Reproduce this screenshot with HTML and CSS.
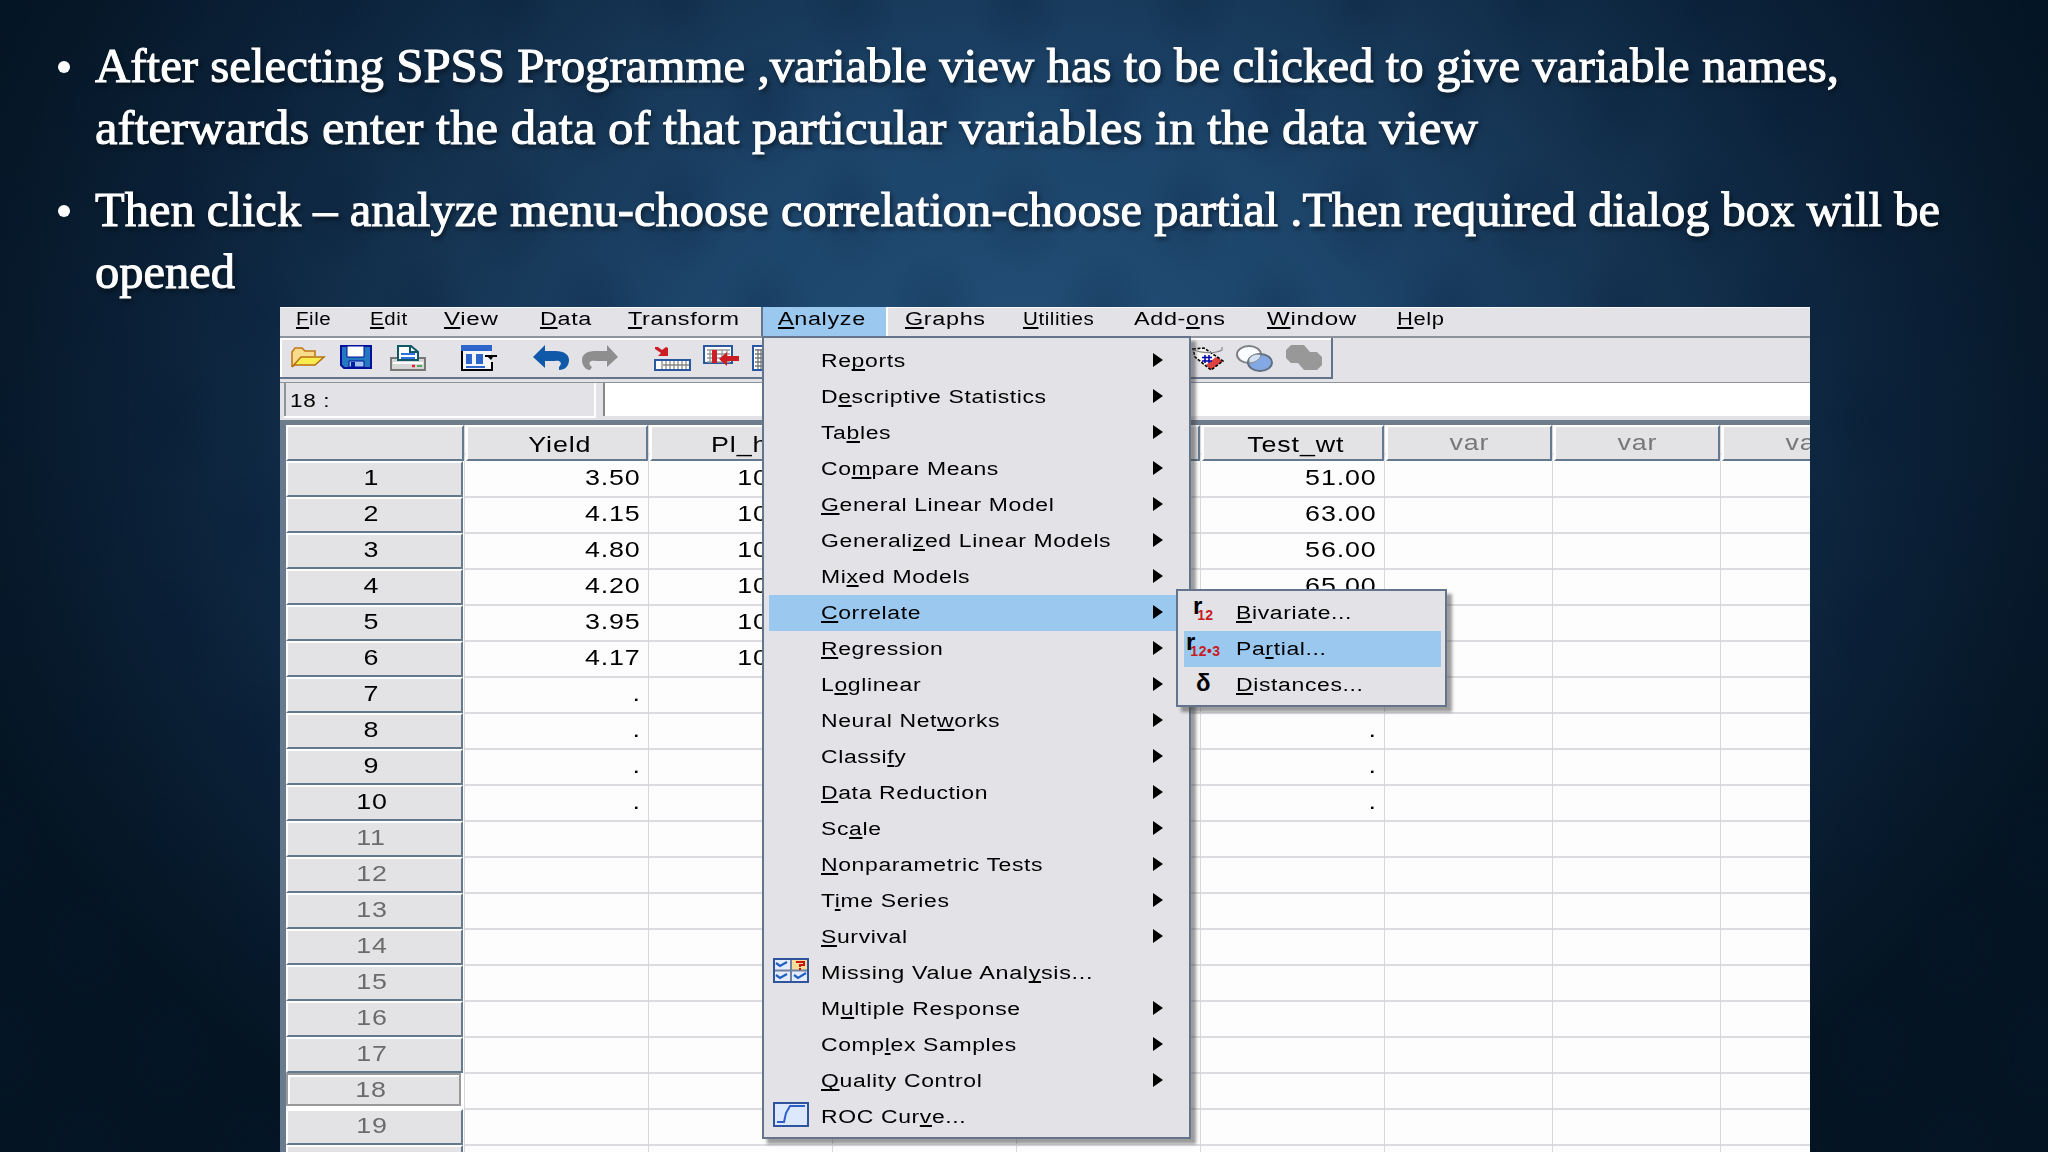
FILE: index.html
```html
<!DOCTYPE html>
<html lang="en">
<head>
<meta charset="utf-8">
<title>Partial correlation in SPSS</title>
<link rel="stylesheet" href="styles.css">
</head>
<body>
<main class="slide">
  <ul class="bullets">
    <li>
      <svg class="lines" width="1900" height="124" viewBox="0 0 1900 124">
        <text x="0" y="46" textLength="1744" lengthAdjust="spacingAndGlyphs">After selecting SPSS Programme ,variable view has to be clicked to give variable names,</text>
        <text x="0" y="107.500" textLength="1383" lengthAdjust="spacingAndGlyphs">afterwards enter the data of that particular variables in the data view</text>
      </svg>
    </li>
    <li>
      <svg class="lines" width="1900" height="124" viewBox="0 0 1900 124">
        <text x="0" y="46" textLength="1845" lengthAdjust="spacingAndGlyphs">Then click – analyze menu-choose correlation-choose partial .Then required dialog box will be</text>
        <text x="0" y="107.500" textLength="140" lengthAdjust="spacingAndGlyphs">opened</text>
      </svg>
    </li>
  </ul>

  <section class="app">
    <nav class="menubar">
      <span class="narrow"><b><u>F</u>ile</b></span><span class="narrow"><b><u>E</u>dit</b></span><span class="broad"><b><u>V</u>iew</b></span><span><b><u>D</u>ata</b></span><span><b><u>T</u>ransform</b></span><span class="open"><b><u>A</u>nalyze</b></span><span><b><u>G</u>raphs</b></span><span class="narrow"><b><u>U</u>tilities</b></span><span><b>Add-<u>o</u>ns</b></span><span class="broad"><b><u>W</u>indow</b></span><span class="snug"><b><u>H</u>elp</b></span>
    </nav>

    <div class="toolrow">
      <div class="toolbar">
        <svg class="i-open" width="36" height="26" viewBox="0 0 36 26"><path d="M2 20V5L5 1H12L15 4H25V9" fill="#f8dc8c" stroke="#c07818" stroke-width="1.6"/><path d="M2 20L11 10H34L25 18H5Z" fill="#f8ec50" stroke="#b87010" stroke-width="1.5"/></svg>
        <svg class="i-save" width="32" height="24" viewBox="0 0 32 24"><path d="M1 1H31V23H4L1 20Z" fill="#2478c0" stroke="#00109c" stroke-width="2"/><path d="M7 1H24V12H7Z" fill="#fff" stroke="#00109c"/><path d="M9 16H24V22H9Z" fill="#9cc0f0" stroke="#00109c"/><path d="M11 17H15V22H11Z" fill="#0020a0"/></svg>
        <svg class="i-print" width="36" height="26" viewBox="0 0 36 26"><path d="M1 13H35V25H1Z" fill="#d6d6d6" stroke="#777" stroke-width="2"/><path d="M3 18H33" stroke="#fff" stroke-width="2"/><path d="M8 15V1H21L28 7V15Z" fill="#fff" stroke="#105868" stroke-width="2"/><path d="M20 1V7H28" fill="none" stroke="#105868" stroke-width="2"/><path d="M11 9H25M11 13H25" stroke="#3070e0" stroke-width="2"/><path d="M22 21H25" stroke="#e02030" stroke-width="2.5"/><path d="M27 21H32" stroke="#50a860" stroke-width="2"/></svg>
        <svg class="i-dialog" width="37" height="26" viewBox="0 0 37 26"><path d="M1 6V25H31V17" fill="none" stroke="#000" stroke-width="2"/><path d="M2 6H30V24H2Z" fill="#f4f6fc"/><path d="M0 0H31V6H0Z" fill="#2f66cc"/><path d="M5 9H11V19H5ZM15 9H22V19H15ZM5 21H24V23H5Z" fill="#2f66cc"/><path d="M24 10H36V12H32L30 15L27 12H24Z" fill="#000"/></svg>
        <svg class="i-undo" width="37" height="25" viewBox="0 0 37 25"><path d="M0 12L12 0V6H22C32 6 36 10 36 15C36 21 32 25 26 25V22C30 18 27 15 22 16H12V23Z" fill="#1058a8"/></svg>
        <svg class="i-redo" width="37" height="25" viewBox="0 0 37 25"><path d="M36 12L25 0V6H13C4 6 0 10 0 15C0 21 4 25 8 25L10 22C5 18 8 15 14 16H25V22Z" fill="#8e8e8e"/></svg>
        <svg class="i-goto" width="37" height="26" viewBox="0 0 37 26"><path d="M1 15H36V25H1Z" fill="#fff" stroke="#2858a0" stroke-width="2"/><path d="M8 16V24M12 16V24M16 16V24M20 16V24M24 16V24M28 16V24M32 16V24M9 20H35" stroke="#888" stroke-width="1.3"/><path d="M1 2H4L8 5L12 2L14 3V11H4L7 8L1 4Z" fill="#cc1c24"/></svg>
        <svg class="i-insert" width="37" height="24" viewBox="0 0 37 24"><path d="M1 1H29V18H1Z" fill="#fff" stroke="#2858a0" stroke-width="2"/><path d="M4 5H27M4 9H27M4 13H27M4 17H27M7 5V17M13 5V17M19 5V17M24 5V17" stroke="#999" stroke-width="1.3"/><path d="M9 5H14V18H9Z" fill="#cc2028"/><path d="M16 14L24 7V11H36V16H24V21Z" fill="#cc1c24"/></svg>
        <svg class="i-column" width="37" height="26" viewBox="0 0 37 26"><path d="M1 1H29V25H1Z" fill="#fff" stroke="#2858a0" stroke-width="2"/><path d="M3 5H27M3 9H27M3 13H27M3 17H27M3 21H27M6 4V24M9 4V24" stroke="#777" stroke-width="1.3"/></svg>
        <svg class="i-label" width="35" height="26" viewBox="0 0 35 26"><path d="M4 4L15 3L34 16L22 25L6 12Z" fill="#f8f8f8"/><path d="M27 12L34 16L22 25L17 20Z" fill="#dc4040"/><path d="M4 4L15 3L34 16L22 25L6 12Z" fill="none" stroke="#000" stroke-width="1.6" stroke-dasharray="3 1.5"/><path d="M5 5C12 8 26 9 33 5V2" fill="none" stroke="#888" stroke-width="1.2"/><path d="M16 10V18M20 10V18M13 12.500H23M13 16H23" stroke="#0000a8" stroke-width="1.5"/></svg>
        <svg class="i-sets" width="37" height="27" viewBox="0 0 37 27"><ellipse cx="13" cy="9.500" rx="12" ry="8.500" fill="#fafcff" stroke="#808080" stroke-width="2"/><ellipse cx="24" cy="17.500" rx="12" ry="8.500" fill="#84a8e4" stroke="#607080" stroke-width="2"/><path d="M13 14C15 10 21 8 25 10C24 15 18 18 13 18Z" fill="#d4e0f4" stroke="#888"/></svg>
        <svg class="i-allsets" width="37" height="26" viewBox="0 0 37 26"><path d="M5 0H18L24 7H31L36 12V20L31 25H18L12 18H5L0 13V5Z" fill="#989898"/></svg>
      </div>
    </div>

    <div class="editrow">
      <div class="cellname"><b>18 :</b></div>
      <div class="cellvalue"></div>
    </div>

    <div class="sheet">
      <div class="col rowheads">
        <div class="head"></div>
        <div class="rh"><b>1</b></div><div class="rh"><b>2</b></div><div class="rh"><b>3</b></div><div class="rh"><b>4</b></div><div class="rh"><b>5</b></div><div class="rh"><b>6</b></div><div class="rh"><b>7</b></div><div class="rh"><b>8</b></div><div class="rh"><b>9</b></div><div class="rh"><b>10</b></div>
        <div class="rh idle"><b>11</b></div><div class="rh idle"><b>12</b></div><div class="rh idle"><b>13</b></div><div class="rh idle"><b>14</b></div><div class="rh idle"><b>15</b></div><div class="rh idle"><b>16</b></div><div class="rh idle"><b>17</b></div><div class="rh idle current"><b>18</b></div><div class="rh idle"><b>19</b></div><div class="rh idle"></div>
      </div>
      <div class="col">
        <div class="head"><b>Yield</b></div>
        <div class="cell"><b>3.50</b></div><div class="cell"><b>4.15</b></div><div class="cell"><b>4.80</b></div><div class="cell"><b>4.20</b></div><div class="cell"><b>3.95</b></div><div class="cell"><b>4.17</b></div><div class="cell"><b>.</b></div><div class="cell"><b>.</b></div><div class="cell"><b>.</b></div><div class="cell"><b>.</b></div>
      </div>
      <div class="col height">
        <div class="head"><b>Pl_ht</b></div>
        <div class="cell"><b>10</b></div><div class="cell"><b>10</b></div><div class="cell"><b>10</b></div><div class="cell"><b>10</b></div><div class="cell"><b>10</b></div><div class="cell"><b>10</b></div>
      </div>
      <div class="col"><div class="head"></div></div>
      <div class="col"><div class="head"></div></div>
      <div class="col">
        <div class="head"><b>Test_wt</b></div>
        <div class="cell"><b>51.00</b></div><div class="cell"><b>63.00</b></div><div class="cell"><b>56.00</b></div><div class="cell"><b>65.00</b></div><div class="cell"></div><div class="cell"></div><div class="cell"></div><div class="cell"><b>.</b></div><div class="cell"><b>.</b></div><div class="cell"><b>.</b></div>
      </div>
      <div class="col unused"><div class="head"><b>var</b></div></div>
      <div class="col unused"><div class="head"><b>var</b></div></div>
      <div class="col unused"><div class="head"><b>var</b></div></div>
    </div>

    <div class="menu analyze">
      <div class="item more"><b>Re<u>p</u>orts</b></div>
      <div class="item more"><b>D<u>e</u>scriptive Statistics</b></div>
      <div class="item more"><b>Ta<u>b</u>les</b></div>
      <div class="item more"><b>Co<u>m</u>pare Means</b></div>
      <div class="item more"><b><u>G</u>eneral Linear Model</b></div>
      <div class="item more"><b>Generali<u>z</u>ed Linear Models</b></div>
      <div class="item more"><b>Mi<u>x</u>ed Models</b></div>
      <div class="item more on"><b><u>C</u>orrelate</b></div>
      <div class="item more"><b><u>R</u>egression</b></div>
      <div class="item more"><b>L<u>o</u>glinear</b></div>
      <div class="item more"><b>Neural Net<u>w</u>orks</b></div>
      <div class="item more"><b>Classi<u>f</u>y</b></div>
      <div class="item more"><b><u>D</u>ata Reduction</b></div>
      <div class="item more"><b>Sc<u>a</u>le</b></div>
      <div class="item more"><b><u>N</u>onparametric Tests</b></div>
      <div class="item more"><b>T<u>i</u>me Series</b></div>
      <div class="item more"><b><u>S</u>urvival</b></div>
      <div class="item full"><svg width="36" height="26" viewBox="0 0 36 26"><path d="M1 1H35V24H1Z" fill="#e4ecfc"/><path d="M19 2H34V12H19Z" fill="#f8dc98"/><path d="M1 12.500H35M18 1V24" stroke="#7080a0" stroke-width="2"/><path d="M1 1H35V24H1Z" fill="none" stroke="#30549c" stroke-width="2"/><path d="M3 5L7 8L14 4M3 17L7 20L14 16M21 17L25 20L33 15" fill="none" stroke="#2060c0" stroke-width="2.200"/><path d="M23 4H31V7H27V9M27 10V12" fill="none" stroke="#c41818" stroke-width="2"/></svg><b>Missing Value Anal<u>y</u>sis...</b></div>
      <div class="item more"><b>M<u>u</u>ltiple Response</b></div>
      <div class="item more"><b>Comp<u>l</u>ex Samples</b></div>
      <div class="item more"><b><u>Q</u>uality Control</b></div>
      <div class="item"><svg width="36" height="26" viewBox="0 0 36 26"><path d="M1 1H35V24H1Z" fill="#dce8fc" stroke="#30549c" stroke-width="2"/><path d="M4 20H11L13 11L17 4H32" fill="none" stroke="#2c60c8" stroke-width="2"/></svg><b>ROC Cur<u>v</u>e...</b></div>
    </div>

    <div class="menu correlate">
      <div class="item"><span class="stat"><i>r</i><em>12</em></span><b><u>B</u>ivariate...</b></div>
      <div class="item on"><span class="stat wide"><i>r</i><em>12•3</em></span><b>Pa<u>r</u>tial...</b></div>
      <div class="item"><span class="stat delta"><i>δ</i></span><b><u>D</u>istances...</b></div>
    </div>
  </section>
</main>
</body>
</html>
```
FILE: styles.css
```css
* { box-sizing: border-box; }

body {
  margin: 0;
  width: 2048px;
  height: 1152px;
  overflow: hidden;
}

.slide {
  width: 2048px;
  height: 1152px;
  overflow: hidden;
  padding-top: 36px;
  background:
    radial-gradient(ellipse 50px 64px at 50% 50%, rgba(4, 24, 52, .2), rgba(4, 24, 52, 0)) 0 0 / 170px 210px,
    radial-gradient(ellipse 50px 64px at 50% 50%, rgba(4, 24, 52, .2), rgba(4, 24, 52, 0)) 85px 105px / 170px 210px,
    radial-gradient(ellipse 1120px 900px at 1024px 400px, #244f78 0%, #1d456b 30%, #163655 52%, #0c233b 75%, #041422 100%);
}

/* Slide text */
.bullets {
  list-style: none;
  margin: 0;
  padding: 0 0 0 58px;
  height: 271px;
  display: flex;
  flex-direction: column;
  gap: 20px;
}
.bullets li { display: flex; gap: 25px; }
.bullets li::before {
  content: "";
  flex: none;
  width: 12px;
  height: 12px;
  margin-top: 25px;
  border-radius: 50%;
  background: #fff;
}
.lines { overflow: visible; display: block; }
.lines text {
  font: 47.5px "Liberation Serif", serif;
  fill: #fff;
  stroke: #fff;
  stroke-width: 1px;
  filter: drop-shadow(2px 3px 2px rgba(0, 0, 0, .45));
}

/* Application window */
.app {
  position: relative;
  width: 1530px;
  height: 845px;
  margin-left: 280px;
  overflow: hidden;
  background: #e3e2e7;
  font: 18px "Liberation Sans", Arial, sans-serif;
  color: #000;
}
.app b {
  display: inline-block;
  font-weight: normal;
  white-space: nowrap;
  letter-spacing: .5px;
  transform: scaleX(1.275);
  transform-origin: left center;
}
.app u {
  text-decoration-thickness: 2px;
  text-underline-offset: 2px;
  text-decoration-skip-ink: none;
}
.app .full b { transform: scaleX(1.3); }

.menubar {
  display: grid;
  grid-template-columns: 73.5px 74px 96px 88px 150.5px 127px 118px 111px 133px 130px auto;
  height: 31px;
  padding-left: 16px;
  border-top: 1px solid #f6f8fb;
  border-bottom: 2px solid #8e939c;
  line-height: 23px;
}
.menubar b { transform: scaleX(1.3); }
.menubar .narrow b { transform: scaleX(1.14); }
.menubar .snug b { transform: scaleX(1.22); }
.menubar .broad b { transform: scaleX(1.34); }
.menubar .open {
  margin: -1px 19px 0 -15px;
  padding: 1px 0 0 15px;
  background: #9bc8ee;
  box-shadow: -2px 0 #64748c, 2px 0 #fff;
}

.toolrow { height: 45px; border-bottom: 1px solid #8e939c; }
.toolbar {
  display: flex;
  align-items: flex-start;
  width: 1053px;
  height: 41px;
  padding: 7px 0 0 10px;
  border: 2px solid #64748c;
  border-width: 0 2px 2px 0;
  box-shadow: inset 2px 2px #fff;
}
.toolbar svg { flex: none; display: block; }
.i-open { margin-top: 2px; }
.i-save { margin-left: 14px; }
.i-print { margin-left: 18px; }
.i-dialog { margin-left: 35px; }
.i-undo { margin-left: 35px; }
.i-redo { margin-left: 12px; }
.i-goto { margin-left: 35px; }
.i-insert { margin-left: 12px; }
.i-column { margin-left: 12px; }
.i-label { margin-left: 400px; }
.i-sets { margin-left: 12px; }
.i-allsets { margin-left: 13px; }

.editrow {
  display: flex;
  gap: 7px;
  height: 37px;
  padding: 0 0 4px 4px;
}
.cellname {
  width: 312px;
  padding: 8px 0 0 4px;
  border-left: 2px solid #8e939c;
  border-right: 2px solid #fff;
  box-shadow: 0 2px #fff;
}
.cellname b { transform: scaleX(1.25); }
.cellvalue { flex: 1; background: #fff; border-left: 2px solid #888; }

/* Data grid */
.sheet {
  display: flex;
  height: 732px;
  padding-left: 6px;
  border-top: 5px solid #6f7c8c;
  background: linear-gradient(90deg, #6b7b8f 6px, #fff 6px);
  font-size: 22px;
}
.sheet b { letter-spacing: .7px; transform: scaleX(1.22); }
.col {
  flex: none;
  width: 184px;
  border-right: 1px solid #d9d7dd;
  background: repeating-linear-gradient(#fdfdfd 0 34px, #dddbe0 34px 36px) 0 37px;
}
.col.unused { width: 168px; }
.head {
  height: 36px;
  margin-left: 1px;
  border: 2px solid #fff;
  border-right-color: #64788e;
  border-bottom-color: #64788e;
  background: #e3e3e5;
  line-height: 35px;
  text-align: center;
}
.head b { transform-origin: center; }
.col:not(.unused) .head { padding-left: 6px; }
.unused .head { color: #777; line-height: 32px; }
.cell {
  height: 36px;
  padding-right: 7px;
  line-height: 33px;
  text-align: right;
}
.cell b { transform-origin: right center; }
.col.height .cell { padding-right: 63px; }

.rowheads.col { width: 179px; background: #fff; }
.rowheads .head { margin-left: 0; }
.rh {
  width: 177px;
  height: 36px;
  padding-right: 6px;
  border: 2px solid #fff;
  border-right-color: #64788e;
  border-bottom-color: #64788e;
  background: #e3e3e5;
  line-height: 30px;
  text-align: center;
}
.rh b { transform-origin: center; }
.rh.idle { color: #6c6c6c; }
.rh.current {
  width: 175px;
  height: 33px;
  margin-bottom: 3px;
  border-color: #999;
  box-shadow: inset 2px 2px #fff;
  line-height: 30px;
}

/* Drop-down menus */
.menu {
  position: absolute;
  border: 2px solid #64748c;
  background: #e3e2e7;
  box-shadow: 5px 5px 3px rgba(60, 60, 60, .5);
}
.analyze {
  left: 482px;
  top: 29px;
  width: 429px;
  height: 803px;
  padding: 5px 3px 0;
}
.item {
  position: relative;
  height: 36.03px;
  padding-left: 54px;
  line-height: 36px;
}
.item.on { background: linear-gradient(#9bc8ee, #9bc8ee) 2px 0 no-repeat; }
.item.more::after {
  content: "";
  position: absolute;
  right: 23px;
  top: 10px;
  border: solid transparent;
  border-width: 7px 0 7px 10px;
  border-left-color: #000;
}
.item svg { position: absolute; left: 6px; top: 3px; }
.correlate {
  left: 896px;
  top: 282px;
  width: 271px;
  height: 118px;
  padding: 4px 4px;
}
.stat { position: absolute; left: 11px; top: 1px; display: flex; }
.stat i { font: bold 24px/20px "Liberation Sans", sans-serif; }
.stat em { font: bold 14px/38px "Liberation Sans", sans-serif; color: #c81c24; margin-left: -5px; }
.stat.wide { left: 4px; }
.stat.wide em { letter-spacing: .5px; }
.stat.delta { left: 14px; }
.stat.delta i { line-height: 30px; }
```
